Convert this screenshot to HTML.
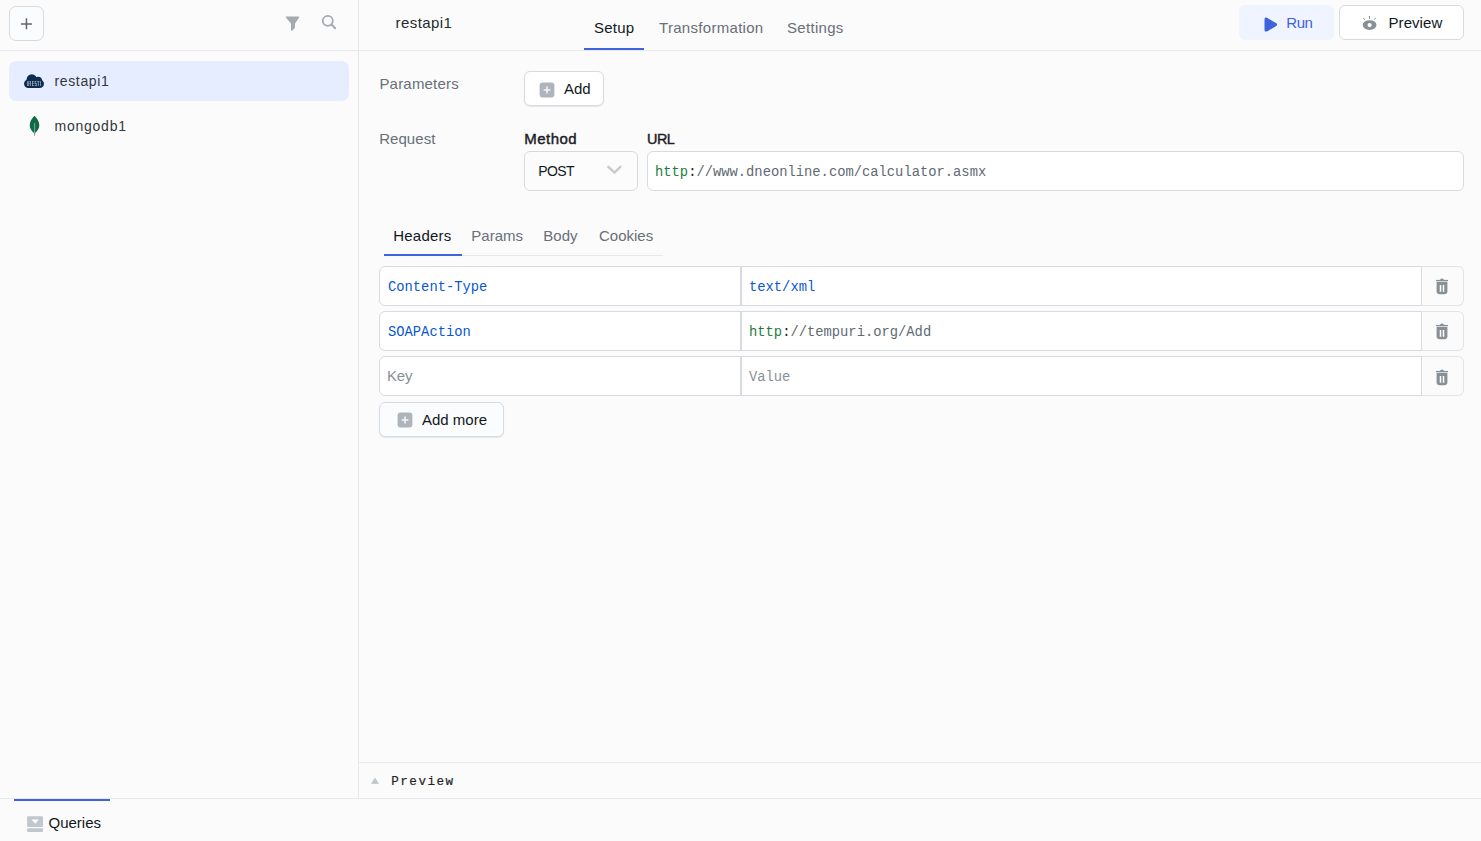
<!DOCTYPE html>
<html><head><meta charset="utf-8">
<style>
*{box-sizing:border-box;margin:0;padding:0}
html,body{width:1481px;height:841px;overflow:hidden;background:#fbfbfc;font-family:"Liberation Sans",sans-serif;color:#11181c}
.a{position:absolute}
.t{position:absolute;white-space:nowrap;line-height:20px;font-size:14px}
.m{font-family:"Liberation Mono",monospace}
.hl{position:absolute;height:1px;background:#e6e8eb}
.vl{position:absolute;width:1px;background:#e6e8eb}
.box{position:absolute;border:1px solid #d7dbdf;border-radius:6px;background:#fff}
.gray{color:#687076}
</style></head><body>

<!-- lines -->
<div class="hl" style="left:0;top:50px;width:1481px"></div>
<div class="vl" style="left:358px;top:0;height:798px"></div>
<div class="hl" style="left:358px;top:762px;width:1123px"></div>
<div class="hl" style="left:0;top:798px;width:1481px"></div>

<!-- sidebar header -->
<div class="a" style="left:9px;top:6px;width:35px;height:35px;border:1px solid #d7dbdf;border-radius:7px;background:#fbfcfd"></div>
<svg class="a" style="left:20px;top:17px" width="13" height="13" viewBox="0 0 13 13"><path d="M.9 6.95H11.9M6.45 1.3V12.3" stroke="#5f666d" stroke-width="1.5"/></svg>
<svg class="a" style="left:285px;top:16px" width="15" height="15" viewBox="0 0 15 15"><path d="M1.7 .5H13.3Q14.7 .5 14 1.7L10 7.6V11.2Q10 12 9.4 12.6L7.3 14.6Q6 15.4 6 14V7.6L1 1.7Q.3 .5 1.7 .5Z" fill="#a4aab1"/></svg>
<svg class="a" style="left:321px;top:14px" width="16" height="16" viewBox="0 0 16 16"><circle cx="6.8" cy="6.8" r="5" fill="none" stroke="#a4aab1" stroke-width="1.8"/><path d="M10.5 10.5L14.2 14.2" stroke="#a4aab1" stroke-width="2" stroke-linecap="round"/></svg>

<!-- sidebar items -->
<div class="a" style="left:9px;top:61px;width:340px;height:40px;border-radius:7px;background:#e6edfe"></div>
<svg class="a" style="left:24px;top:73px" width="21" height="16" viewBox="0 0 21 16"><rect x="0" y="6.4" width="20" height="8.6" rx="4.3" fill="#0d2d52"/><circle cx="7.8" cy="6.4" r="5.2" fill="#0d2d52"/><circle cx="14.2" cy="7.6" r="3.8" fill="#0d2d52"/><g fill="#f4f6f9" fill-opacity=".8"><rect x="3" y="8.2" width=".6" height="4.8"/><rect x="4.5" y="8.2" width=".6" height="4.8"/><rect x="5.3" y="8.2" width="1.2" height=".5"/><rect x="6" y="8.2" width=".6" height="2.4"/><rect x="5.3" y="10.3" width="1.2" height=".5"/><rect x="6" y="10.8" width=".6" height="2.2"/><rect x="8.3" y="8.2" width=".6" height="4.8"/><rect x="8.3" y="8.2" width="1.8" height=".5"/><rect x="8.3" y="10.3" width="1.5" height=".5"/><rect x="8.3" y="12.3" width="1.8" height=".5"/><rect x="10.8" y="8.2" width="1.8" height=".5"/><rect x="10.8" y="8.2" width=".6" height="2.6"/><rect x="10.8" y="10.3" width="1.8" height=".5"/><rect x="11.8" y="10.3" width=".6" height="2.7"/><rect x="10.8" y="12.3" width="1.8" height=".5"/><rect x="13.2" y="8.2" width="2.2" height=".5"/><rect x="13.9" y="8.2" width=".6" height="4.8"/><rect x="16.3" y="8.2" width=".6" height="4.8"/></g></svg>
<div class="t" style="left:54.5px;top:71px;letter-spacing:.64px;color:#30373c">restapi1</div>
<svg class="a" style="left:28.6px;top:115px" width="11" height="22" viewBox="0 0 11 22"><path d="M5.5 .8C3 3.5 .7 6.5 .7 10.2c0 3.5 2.3 6.3 4.1 7.5l.4 2.8h.6l.4-2.8c1.8-1.2 4.1-4 4.1-7.5C10.3 6.5 8 3.5 5.5.8z" fill="#0f6b47"/><path d="M5.6 8v12.6" stroke="#7fb89a" stroke-width=".9"/></svg>
<div class="t" style="left:54.5px;top:116px;letter-spacing:.76px;color:#30373c">mongodb1</div>

<!-- main header -->
<div class="t" style="left:395.5px;top:13px;font-size:15px;letter-spacing:.43px;color:#252b30">restapi1</div>
<div class="t" style="left:594px;top:18px;font-size:15px;letter-spacing:.25px">Setup</div>
<div class="t gray" style="left:659px;top:18px;font-size:15px;letter-spacing:.3px">Transformation</div>
<div class="t gray" style="left:787px;top:18px;font-size:15px;letter-spacing:.3px">Settings</div>
<div class="a" style="left:584px;top:48px;width:60px;height:2px;background:#3e63dd"></div>

<div class="a" style="left:1239px;top:5px;width:95px;height:35px;border-radius:6px;background:#f0f4ff"></div>
<svg class="a" style="left:1262px;top:16px" width="17" height="17" viewBox="0 0 17 17"><path d="M2.5 3.2c0-1.3 1.4-2 2.5-1.4l9.3 5.4c1.1.6 1.1 2.2 0 2.8L5 15.4c-1.1.6-2.5-.1-2.5-1.4z" fill="#3e63dd"/></svg>
<div class="t" style="left:1286.3px;top:13px;font-size:15px;color:#3e63dd;letter-spacing:-.45px">Run</div>

<div class="a" style="left:1339px;top:5px;width:125px;height:35px;border:1px solid #d7dbdf;border-radius:6px;background:#fff"></div>
<svg class="a" style="left:1361px;top:15px" width="17" height="17" viewBox="0 0 17 17"><ellipse cx="8.6" cy="10.05" rx="6.9" ry="4.85" fill="#889096"/><circle cx="8.6" cy="10.1" r="2.1" fill="#fff"/><path d="M8.5 1.4v2M2.6 3.3l.9 1.1M14.4 3.3l-.9 1.1" stroke="#889096" stroke-width="1" stroke-linecap="round"/></svg>
<div class="t" style="left:1388.5px;top:13px;font-size:15px;letter-spacing:.07px">Preview</div>

<!-- parameters -->
<div class="t gray" style="left:379.4px;top:74px;font-size:15px;letter-spacing:.2px">Parameters</div>
<div class="box" style="left:524px;top:71px;width:80px;height:35px;box-shadow:0 1px 1px rgba(0,0,0,.08)"></div>
<svg class="a" style="left:539px;top:82px" width="17" height="17" viewBox="0 0 17 17"><rect x=".6" y=".6" width="14.8" height="14.8" rx="3" fill="#aeb4bb"/><path d="M4.6 8H11.4M8 4.6V11.4" stroke="#f3f4f5" stroke-width="1.6"/></svg>
<div class="t" style="left:564px;top:79px;font-size:15px">Add</div>

<!-- request -->
<div class="t gray" style="left:379.2px;top:129px;font-size:15px;letter-spacing:.05px">Request</div>
<div class="t" style="left:524.3px;top:129px;font-size:15px;letter-spacing:.45px;-webkit-text-stroke:.42px #1a2125;color:#1a2125">Method</div>
<div class="t" style="left:647.1px;top:129px;font-size:14.4px;letter-spacing:-.6px;-webkit-text-stroke:.42px #1a2125;color:#1a2125">URL</div>
<div class="box" style="left:524px;top:151px;width:114px;height:40px;background:#fcfcfd"></div>
<div class="t" style="left:538.2px;top:161px;font-size:14px;letter-spacing:-.6px">POST</div>
<svg class="a" style="left:606px;top:164px" width="17" height="12" viewBox="0 0 17 12"><path d="M2.4 2.9L8.4 8.6L14.4 2.9" fill="none" stroke="#cbcbcb" stroke-width="2.5" stroke-linecap="round" stroke-linejoin="round"/></svg>
<div class="box" style="left:647px;top:151px;width:817px;height:40px"></div>
<div class="t m" style="left:655px;top:162.6px;font-size:13.8px"><span style="color:#1e7d3c">http</span><span style="color:#222">:</span><span style="color:#5f6a74">//www.dneonline.com/calculator.asmx</span></div>

<!-- headers tabs -->
<div class="t" style="left:393.3px;top:226px;font-size:15px;letter-spacing:.2px">Headers</div>
<div class="t gray" style="left:471.3px;top:226px;font-size:15px">Params</div>
<div class="t gray" style="left:543.3px;top:226px;font-size:15px">Body</div>
<div class="t gray" style="left:599px;top:226px;font-size:15px">Cookies</div>
<div class="hl" style="left:384px;top:255px;width:279px"></div>
<div class="a" style="left:384px;top:254px;width:78px;height:2px;background:#3e63dd"></div>

<!-- rows -->
<div id="rows"></div>
<div class="a" style="left:1421px;top:266px;width:43px;height:40px;border:1px solid #e1e4e7;border-left:0;border-radius:0 6px 6px 0;background:#fbfbfc"></div>
<div class="a" style="left:379px;top:266px;width:1043px;height:40px;border:1px solid #d7dbdf;border-radius:6px 0 0 6px;background:#fff"></div>
<div class="a" style="left:740px;top:267px;width:2px;height:38px;background:#d7dbdf"></div>
<div class="t m" style="left:388px;top:277.5px;font-size:13.8px;color:#0a58d0">Content-Type</div>
<div class="t m" style="left:749px;top:277.5px;font-size:13.8px;color:#0a58d0">text/xml</div>

<div class="a" style="left:1421px;top:311px;width:43px;height:40px;border:1px solid #e1e4e7;border-left:0;border-radius:0 6px 6px 0;background:#fbfbfc"></div>
<div class="a" style="left:379px;top:311px;width:1043px;height:40px;border:1px solid #d7dbdf;border-radius:6px 0 0 6px;background:#fff"></div>
<div class="a" style="left:740px;top:312px;width:2px;height:38px;background:#d7dbdf"></div>
<div class="t m" style="left:388px;top:323px;font-size:13.8px;color:#0a58d0">SOAPAction</div>
<div class="t m" style="left:749px;top:323px;font-size:13.8px"><span style="color:#1e7d3c">http</span><span style="color:#222">:</span><span style="color:#5f6a74">//tempuri.org/Add</span></div>

<div class="a" style="left:1421px;top:356px;width:43px;height:40px;border:1px solid #e1e4e7;border-left:0;border-radius:0 6px 6px 0;background:#fbfbfc"></div>
<div class="a" style="left:379px;top:356px;width:1043px;height:40px;border:1px solid #d7dbdf;border-radius:6px 0 0 6px;background:#fff"></div>
<div class="a" style="left:740px;top:357px;width:2px;height:38px;background:#d7dbdf"></div>
<div class="t" style="left:387px;top:366px;font-size:15px;color:#889096;letter-spacing:-.2px">Key</div>
<div class="t m" style="left:749px;top:368.4px;font-size:13.8px;color:#889096">Value</div>

<!-- trash icons -->
<svg class="a" style="left:1435px;top:277px" width="14" height="18" viewBox="0 0 14 18"><path d="M1 3.5h12" stroke="#889096" stroke-width="1.2"/><path d="M5 3.2a2 1.6 0 0 1 4 0z" fill="#889096"/><path d="M1.6 4.8h10.8v9.4c0 1.7-1.2 3-3 3H4.6c-1.8 0-3-1.3-3-3z" fill="#889096"/><path d="M5.5 8.1v6.6M8.5 8.1v6.6" stroke="#fff" stroke-width="1.5"/></svg>
<svg class="a" style="left:1435px;top:322px" width="14" height="18" viewBox="0 0 14 18"><path d="M1 3.5h12" stroke="#889096" stroke-width="1.2"/><path d="M5 3.2a2 1.6 0 0 1 4 0z" fill="#889096"/><path d="M1.6 4.8h10.8v9.4c0 1.7-1.2 3-3 3H4.6c-1.8 0-3-1.3-3-3z" fill="#889096"/><path d="M5.5 8.1v6.6M8.5 8.1v6.6" stroke="#fff" stroke-width="1.5"/></svg>
<svg class="a" style="left:1435px;top:368px" width="14" height="18" viewBox="0 0 14 18"><path d="M1 3.5h12" stroke="#889096" stroke-width="1.2"/><path d="M5 3.2a2 1.6 0 0 1 4 0z" fill="#889096"/><path d="M1.6 4.8h10.8v9.4c0 1.7-1.2 3-3 3H4.6c-1.8 0-3-1.3-3-3z" fill="#889096"/><path d="M5.5 8.1v6.6M8.5 8.1v6.6" stroke="#fff" stroke-width="1.5"/></svg>

<!-- add more -->
<div class="box" style="left:379px;top:402px;width:125px;height:35px;background:#fbfcfd;box-shadow:0 1px 1px rgba(0,0,0,.08)"></div>
<svg class="a" style="left:397px;top:412px" width="17" height="17" viewBox="0 0 17 17"><rect x=".6" y=".6" width="14.8" height="14.8" rx="3" fill="#aeb4bb"/><path d="M4.6 8H11.4M8 4.6V11.4" stroke="#f3f4f5" stroke-width="1.6"/></svg>
<div class="t" style="left:422px;top:410px;font-size:15px">Add more</div>

<!-- preview bar -->
<svg class="a" style="left:370px;top:776px" width="10" height="9" viewBox="0 0 10 9"><path d="M5 2.2L8.4 7.4H1.6z" fill="#c1c8cd" stroke="#c1c8cd" stroke-width=".9" stroke-linejoin="round"/></svg>
<div class="t m" style="left:391.3px;top:772px;font-size:12.6px;letter-spacing:1.47px;color:#1f2529;-webkit-text-stroke:.2px #1f2529">Preview</div>

<!-- bottom bar -->
<div class="a" style="left:14px;top:799px;width:96px;height:2px;background:#3e63dd"></div>
<svg class="a" style="left:27px;top:816px" width="16" height="17" viewBox="0 0 16 17"><rect x=".1" y=".3" width="15.9" height="10.6" rx="1" fill="#c1c8cd"/><rect x=".1" y="12.2" width="15.9" height="3.7" rx=".8" fill="#c1c8cd"/><path d="M4.6 3.6h7.2L8.2 7.8z" fill="#fff"/></svg>
<div class="t" style="left:48.5px;top:813px;font-size:15px">Queries</div>

</body></html>
